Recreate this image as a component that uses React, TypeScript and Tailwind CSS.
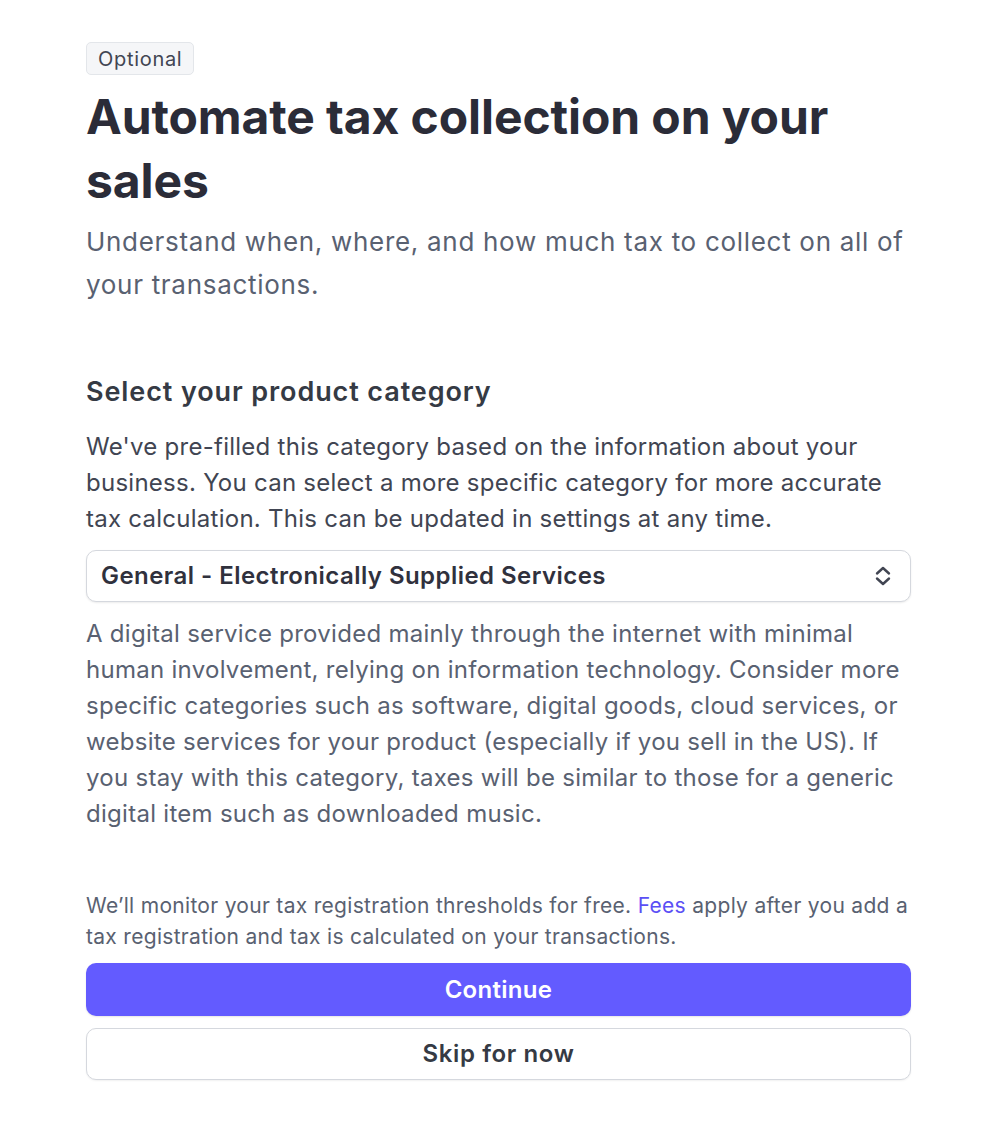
function CategorySelect() {
  return (
    <div className="mt-[13px] flex h-[52px] w-full items-center justify-between rounded-[10px] border border-[#d5d8de] bg-white pl-[14px] pr-[17px] shadow-[0_1px_2px_rgba(0,0,0,0.08)]">
      <span className="text-[24px] font-semibold tracking-[0.45px] text-[#30313d]">
        General - Electronically Supplied Services
      </span>
      <svg width="20" height="24" viewBox="0 0 20 24" fill="none" className="text-[#414552]">
        <path d="M4 9.5 L10 4 L16 9.5" stroke="currentColor" strokeWidth="2.4" strokeLinecap="round" strokeLinejoin="round" />
        <path d="M4 14.5 L10 20 L16 14.5" stroke="currentColor" strokeWidth="2.4" strokeLinecap="round" strokeLinejoin="round" />
      </svg>
    </div>
  );
}

export default function App() {
  return (
    <div className="min-h-screen bg-white font-['Inter',sans-serif] antialiased">
      <div className="ml-[86px] w-[825px] pt-[42px] pb-[55px]">
        <span className="inline-flex h-[33px] items-center rounded-[5px] border border-[#e3e6ea] bg-[#f5f6f8] px-[11px] text-[20px] tracking-[0.7px] text-[#414552]">
          Optional
        </span>
        <h1 className="mt-[10px] text-[48px] leading-[64px] font-bold tracking-[-0.1px] text-[#2b2c38]">
          Automate tax collection on your sales
        </h1>
        <p className="mt-[7px] text-[26px] leading-[43px] tracking-[0.7px] text-[#596171]">
          Understand when, where, and how much tax to collect on all of your transactions.
        </p>

        <h2 className="mt-[68px] text-[27px] leading-[36px] font-semibold tracking-[0.9px] text-[#353a44]">
          Select your product category
        </h2>
        <p className="mt-[19px] text-[24px] leading-[36px] tracking-[0.26px] text-[#414552]">
          We've pre-filled this category based on the information about your business. You can
          select a more specific category for more accurate tax calculation. This can be updated
          in settings at any time.
        </p>
        <CategorySelect />
        <p className="mt-[14px] text-[24px] leading-[36px] tracking-[0.28px] text-[#596171]">
          A digital service provided mainly through the internet with minimal human involvement,
          relying on information technology. Consider more specific categories such as software,
          digital goods, cloud services, or website services for your product (especially if you
          sell in the US). If you stay with this category, taxes will be similar to those for a
          generic digital item such as downloaded music.
        </p>

        <p className="mt-[58px] text-[21px] leading-[31px] tracking-[0.3px] text-[#596171]">
          We’ll monitor your tax registration thresholds for free.{" "}
          <a href="#" className="text-[#5b4ff5]">
            Fees
          </a>{" "}
          apply after you add a tax registration and tax is calculated on your transactions.
        </p>
        <div className="mt-[11px] flex flex-col gap-[12px]">
          <button className="flex h-[53px] w-full items-center justify-center rounded-[10px] bg-[#635bff] text-[24px] font-semibold tracking-[0.3px] text-white shadow-[0_1px_2px_rgba(0,0,0,0.1)]">
            Continue
          </button>
          <button className="flex h-[52px] w-full items-center justify-center rounded-[10px] border border-[#d5d8de] bg-white text-[24px] font-semibold tracking-[0.6px] text-[#353a44] shadow-[0_1px_2px_rgba(0,0,0,0.06)]">
            Skip for now
          </button>
        </div>
      </div>
    </div>
  );
}
